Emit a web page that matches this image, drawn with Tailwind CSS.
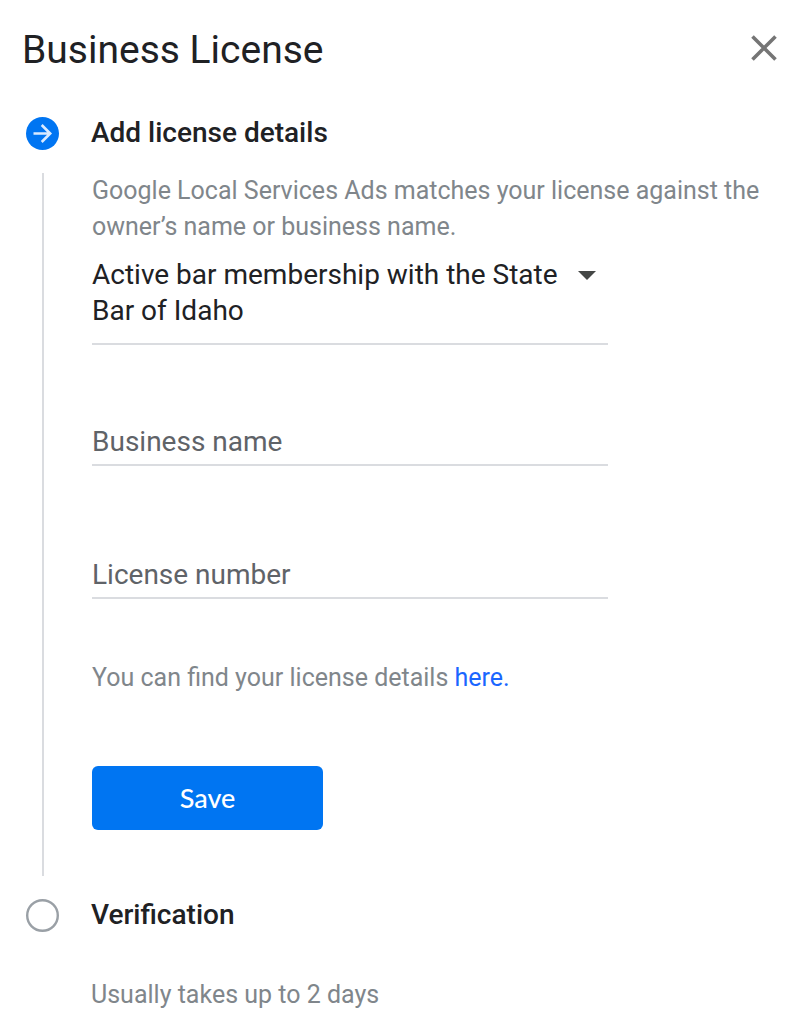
<!DOCTYPE html>
<html lang="en">
<head>
    <meta charset="UTF-8">
    <meta name="viewport" content="width=device-width, initial-scale=1.0">
    <title>Business License</title>
    <script src="https://cdn.jsdelivr.net/npm/@tailwindcss/browser@4"></script>
</head>
<body class="bg-white font-[Roboto,sans-serif] text-[#202124]">
    <main class="pt-[26px] pb-3">
        <header class="flex items-start justify-between pl-[22px] pr-6">
            <h1 class="text-[39px] leading-[48px]">Business License</h1>
            <button type="button" aria-label="Close" class="mt-2">
                <svg class="w-7 h-7" viewBox="0 0 28 28" fill="none" stroke="#757575" stroke-width="3.600">
                    <path d="M2.500 2.500 25.500 25.500M25.500 2.500 2.500 25.500"/>
                </svg>
            </button>
        </header>

        <!-- Step 1 -->
        <section class="mt-[41px]">
            <div class="flex items-center gap-8 pl-[26px]">
                <svg class="w-[33px] h-[33px]" viewBox="0 0 33 33" fill="none">
                    <circle cx="16.500" cy="16.500" r="16.500" fill="#0075f2"/>
                    <path d="M7.500 16.500H24M15.700 8 24.200 16.500 15.700 25" stroke="#d9eaff" stroke-width="2.600"/>
                </svg>
                <h2 class="text-[28px] leading-9 font-medium">Add license details</h2>
            </div>

            <div class="mt-[22px] ml-[42px] border-l-2 border-[#dadce0] pl-12 pr-8 pb-[46px]">
                <p class="text-[25px] leading-9 text-[#80868b]">Google Local Services Ads matches your license against the owner’s name or business name.</p>

                <form class="max-w-[516px]">
                    <div class="relative mt-3">
                        <select aria-label="License type" class="block w-full appearance-none whitespace-normal border-b-2 border-[#dadce0] pb-3.5 pr-8 text-[28px] leading-9 bg-transparent">
                            <option>Active bar membership with the State Bar of Idaho</option>
                        </select>
                        <svg class="absolute right-3 top-3.5 w-[18px] h-[9px] pointer-events-none" viewBox="0 0 18 9" fill="#444746">
                            <path d="M0 0H18L9 9Z"/>
                        </svg>
                    </div>
                    <input type="text" aria-label="Business name" placeholder="Business name" class="block mt-[79px] w-full h-[42px] pb-1.5 border-b-2 border-[#dadce0] text-[28px] leading-9 placeholder:text-[#5f6368]">
                    <input type="text" aria-label="License number" placeholder="License number" class="block mt-[91px] w-full h-[42px] pb-1.5 border-b-2 border-[#dadce0] text-[28px] leading-9 placeholder:text-[#5f6368]">
                    <p class="mt-[61px] text-[25px] leading-9 text-[#80868b]">You can find your license details <a href="#" class="text-[#1a66ff]">here.</a></p>
                    <button type="submit" class="block mt-[70px] w-[231px] h-16 rounded-md bg-[#0075f2] font-[Lato,sans-serif] text-[27px] font-medium text-white">Save</button>
                </form>
            </div>
        </section>

        <!-- Step 2 -->
        <section class="mt-[21px]">
            <div class="flex items-center gap-8 pl-[26px]">
                <svg class="w-[33px] h-[33px]" viewBox="0 0 33 33" fill="none">
                    <circle cx="16.500" cy="16.500" r="15.300" stroke="#9aa0a6" stroke-width="2.400"/>
                </svg>
                <h2 class="text-[28px] leading-9 font-medium">Verification</h2>
            </div>
            <p class="mt-11 pl-[91px] text-[25px] leading-9 text-[#80868b]">Usually takes up to 2 days</p>
        </section>
    </main>
</body>
</html>
